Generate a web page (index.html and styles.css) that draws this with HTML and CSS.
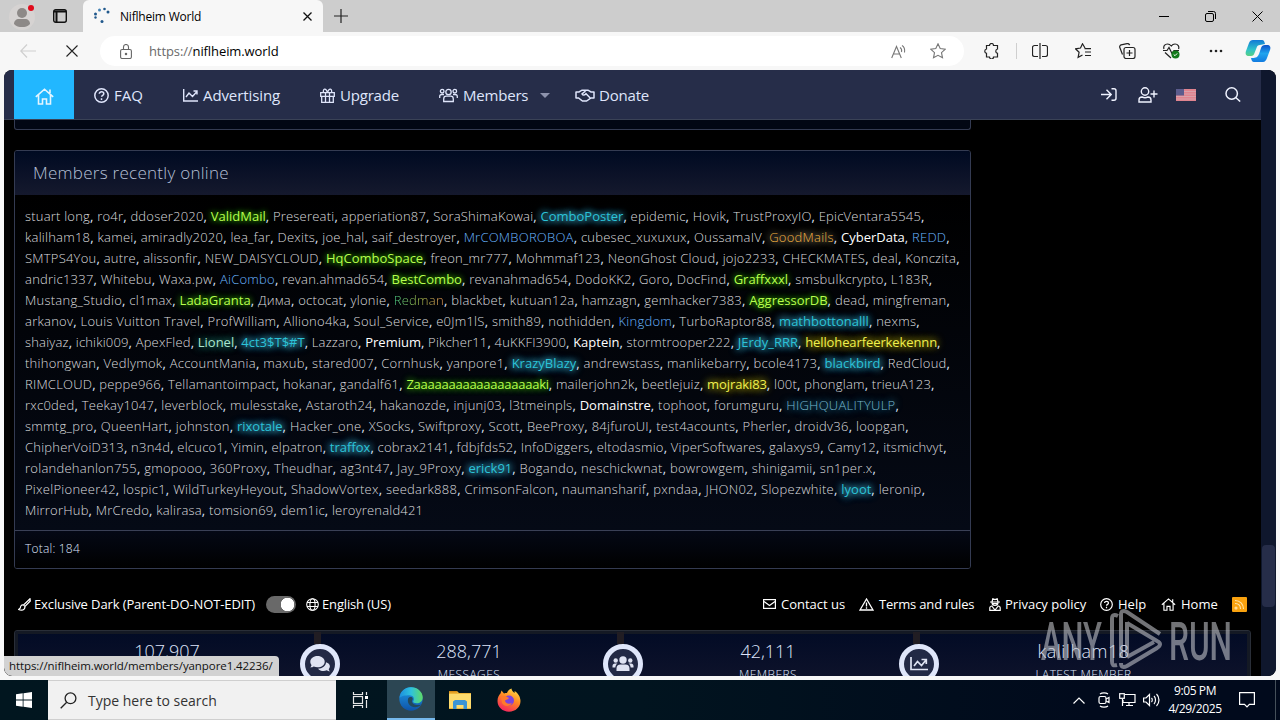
FILE: index.html
```html
<!DOCTYPE html>
<html lang="en">
<head>
  <meta charset="UTF-8">
  <meta name="viewport" content="width=device-width, initial-scale=1.0">
  <title>Niflheim World</title>
  <link rel="stylesheet" href="styles.css">
</head>
<body>
  <!-- browser tabs -->
  <div class="tabstrip">
    <div class="tab-tools">
      <div class="avatar">
        <svg width="26" height="26" viewBox="0 0 26 26"><circle cx="13" cy="13" r="13" fill="#d6d3d2"/><circle cx="13" cy="9" r="5" fill="#8d8987"/><path d="M5 20c0-3 2-5 5-5h6c3 0 5 2 5 5-2 2.500-5 3-8 3s-6-.5-8-3z" fill="#8d8987"/></svg>
        <span class="dot"></span>
      </div>
      <svg class="workspaces" width="14" height="14" viewBox="0 0 14 14" fill="none" stroke="#111" stroke-width="1.400"><rect x=".7" y=".7" width="12.600" height="12.600" rx="2"/><path d="M1 2.500h12M3.500 3v10" stroke-width="2"/></svg>
    </div>
    <div class="tab">
      <svg width="18" height="18" viewBox="0 0 18 18" fill="#20588c"><circle cx="2.500" cy="7" r="1.500"/><circle cx="6.500" cy="3" r="1.500" fill="#4583b5"/><circle cx="11.500" cy="2" r="1.300"/><circle cx="15" cy="5" r="1.500"/><circle cx="2.500" cy="10.500" r="1.200"/><circle cx="9" cy="14.500" r="1.500"/></svg>
      <span class="tab-title">Niflheim World</span>
      <svg width="9" height="9" viewBox="0 0 9 9" stroke="#111" stroke-width="1.300"><path d="M.5.5l8 8M8.500.5l-8 8"/></svg>
    </div>
    <svg class="new-tab" width="14" height="14" viewBox="0 0 14 14" stroke="#222" stroke-width="1.200"><path d="M7 0v14M0 7h14"/></svg>
    <div class="win-buttons">
      <svg width="10" height="10" viewBox="0 0 10 10" stroke="#000"><path d="M0 5.500h10"/></svg>
      <svg width="11" height="11" viewBox="0 0 11 11" fill="none" stroke="#000"><rect x=".5" y="2.500" width="8" height="8" rx="1.500"/><path d="M3 .5h5.500a2 2 0 0 1 2 2V8"/></svg>
      <svg width="11" height="11" viewBox="0 0 11 11" stroke="#000"><path d="M.5.5l10 10M10.500.5l-10 10"/></svg>
    </div>
  </div>

  <!-- address bar -->
  <div class="toolbar">
    <svg class="back" width="16" height="14" viewBox="0 0 16 14" fill="none" stroke="#cfcfcf" stroke-width="1.200"><path d="M7 .5L.8 7 7 13.500M1 7h15"/></svg>
    <svg class="stop" width="12" height="12" viewBox="0 0 12 12" stroke="#222" stroke-width="1.100"><path d="M.5.5l11 11M11.500.5l-11 11"/></svg>
    <div class="address">
      <svg width="12" height="15" viewBox="0 0 12 15" fill="none" stroke="#666" stroke-width="1.100"><rect x=".6" y="5.500" width="10.800" height="9" rx="1.500"/><path d="M3.500 5.500V3a2.500 2.500 0 0 1 5 0v2.500"/><circle cx="6" cy="10" r=".7" fill="#666"/></svg>
      <span class="url"><span class="grey">https://</span>niflheim.world</span>
      <svg class="read" width="16" height="15" viewBox="0 0 16 15" fill="none" stroke="#777" stroke-width="1.100"><path d="M.7 14L5.500 2.500 10.300 14M2.300 10h6.400M9 3.500c1.500 1 2 2.500 1.500 4.500M11 1.500c2.500 1.500 3 4 2.500 7"/></svg>
      <svg width="16" height="16" viewBox="0 0 16 16" fill="none" stroke="#777" stroke-width="1.100"><path d="M8 .8l2.200 4.700 5.100.6-3.800 3.500 1 5.200L8 12.300l-4.500 2.500 1-5.200L.7 6.100l5.100-.6z"/></svg>
    </div>
    <div class="tools">
      <svg width="15" height="16" viewBox="0 0 15 16" fill="none" stroke="#222" stroke-width="1.200"><path d="M2.500 2.500h3a2 2 0 0 1 4 0h4V6a2.200 2.200 0 0 0 0 4.300v3.700H9.500a2 2 0 0 1-4 0h-3v-3.700a2.200 2.200 0 0 1 0-4.300z"/></svg>
      <i class="sep"></i>
      <svg width="16" height="16" viewBox="0 0 16 16" fill="none" stroke="#222" stroke-width="1.200"><path d="M8 0v16M6 2.500H2.500a2 2 0 0 0-2 2v7a2 2 0 0 0 2 2H6M10 2.500h3.500a2 2 0 0 1 2 2v7a2 2 0 0 1-2 2H10"/></svg>
      <svg width="17" height="16" viewBox="0 0 17 16" fill="none" stroke="#222" stroke-width="1.200"><path d="M10 5L7.500.8 5.500 5l-5 .8 3.600 3.500-1 5 4.400-2.300M9.500 5.600h6.500M10 9h6M10 12.500h6"/></svg>
      <svg width="17" height="16" viewBox="0 0 17 16" fill="none" stroke="#222" stroke-width="1.200"><rect x="5" y="4.500" width="11" height="11" rx="2"/><path d="M10.500 7v6M7.500 10h6M3.500 11.500L.8 4.500a2 2 0 0 1 1.300-2.600L8 .7a2 2 0 0 1 2.600 1.500"/></svg>
      <svg width="17" height="16" viewBox="0 0 17 16" fill="none" stroke="#222" stroke-width="1.200"><path d="M1 6C0 3 2 1 4.500 1 6.500 1 7.500 2 8.300 3 9 2 10.500 1 12 1c3 0 4.500 2.500 3.500 5M0 7.500h4L6 4.500l3 6 2-3h5M2 9.500l6 5.500"/><circle cx="12.500" cy="11.500" r="4" fill="#12791a" stroke="none"/><path d="M10.700 11.500l1.300 1.200 2.200-2.300" stroke="#fff" stroke-width="1"/></svg>
      <svg class="dots" width="14" height="4" viewBox="0 0 14 4" fill="#222"><circle cx="2" cy="2" r="1.300"/><circle cx="7" cy="2" r="1.300"/><circle cx="12" cy="2" r="1.300"/></svg>
      <svg class="copilot" width="26" height="24" viewBox="0 0 26 24">
        <defs>
          <linearGradient id="cpA" x1="0" y1="0" x2="0" y2="1"><stop offset="0" stop-color="#1179d6"/><stop offset=".6" stop-color="#2fc3c9"/><stop offset="1" stop-color="#58d083"/></linearGradient>
          <linearGradient id="cpB" x1="0" y1="0" x2="0" y2="1"><stop offset="0" stop-color="#0c51c9"/><stop offset=".5" stop-color="#20a4ee"/><stop offset="1" stop-color="#127be0"/></linearGradient>
        </defs>
        <path d="M8 1h9c2 0 2.500 2 3 4l-5 1c-2 0-3 1-3.500 3l-2 5c-.5 2-1.500 3-3.500 3H4c-3 0-4-2-3-5L4 4c.7-2 2-3 4-3z" fill="url(#cpA)"/>
        <path d="M18 23H9c-2 0-2.500-2-3-4 0 0 5 0 6-1s1.500-2 2-3l2-6c.5-2 2-3 4-3h2c3 0 4 2 3 5l-3 8c-.7 2-2 4-4 4z" fill="url(#cpB)"/>
      </svg>
    </div>
  </div>

  <!-- forum page -->
  <div class="viewport">
    <div class="page">
      <nav class="nav">
        <a class="home"><svg width="19" height="17" viewBox="0 0 19 17" fill="none" stroke="#e4f5ff" stroke-width="1.600"><path d="M.8 8.800L9.500 1.200l8.700 7.600M15 5V1.500M3.500 7v9h4v-5h4v5h4V7"/></svg></a>
        <a class="faq"><svg width="15" height="15" viewBox="0 0 15 15" fill="none" stroke="#dfe5fb" stroke-width="1.500"><circle cx="7.500" cy="7.500" r="6.700"/><path d="M5.300 5.800c0-2.700 4.500-2.600 4.500 0 0 1.600-2.200 1.500-2.200 3M7.500 10.200v1.700"/></svg><span>FAQ</span></a>
        <a class="adv"><svg width="15" height="13" viewBox="0 0 15 13" fill="none" stroke="#dfe5fb" stroke-width="1.400"><path d="M.7 0v12H15M3 8l3-4 3.500 3.500L14 2.500M10.500 2H14v3.500"/></svg><span>Advertising</span></a>
        <a class="upg"><svg width="15" height="15" viewBox="0 0 15 15" fill="none" stroke="#dfe5fb" stroke-width="1.300"><path d="M.7 4.700h13.600v3.600H.7zM1.700 8.300h11.600v6H1.700zM5.500 4.700v9.600M9.500 4.700v9.600M7.500 4.500C6-.5 2.500.5 3.500 4.500M7.500 4.500C9-.5 12.500.5 11.500 4.500"/></svg><span>Upgrade</span></a>
        <a class="mem"><svg width="19" height="15" viewBox="0 0 19 15" fill="none" stroke="#dfe5fb" stroke-width="1.300"><circle cx="9.500" cy="4" r="2.700"/><circle cx="3.200" cy="3.200" r="1.800"/><circle cx="15.800" cy="3.200" r="1.800"/><path d="M4.700 13.500v-2.500c0-2 1-2.800 2.500-2.800h4.600c1.500 0 2.500.8 2.500 2.800v2.500zM.7 10V8.500C.7 7 1.500 6.500 3 6.500h2M18.300 10V8.500c0-1.500-.8-2-2.300-2h-2"/></svg><span>Members</span><i class="caret"></i></a>
        <a class="don"><svg width="20" height="13" viewBox="0 0 20 13" fill="none" stroke="#dfe5fb" stroke-width="1.500"><path d="M1 2.500v7M19 2.500v7M1 3h3l3-1.800h6L16 3h3M1 9h2.500l4 3h4L16 9h3M10.500 2L7 5c1 1.800 3 1.200 4-.3l4 4"/></svg><span>Donate</span></a>
        <div class="nav-right">
          <svg width="16" height="13" viewBox="0 0 16 13" fill="none" stroke="#f0f3ff" stroke-width="1.400"><path d="M0 6.500h10M5.500 1.800l4.700 4.700-4.700 4.700M10.500.8H13c1.500 0 2 .7 2 2v7.400c0 1.300-.5 2-2 2h-2.500"/></svg>
          <svg width="20" height="16" viewBox="0 0 20 16" fill="none" stroke="#f0f3ff" stroke-width="1.400"><circle cx="7" cy="4.500" r="3.700"/><path d="M1 15v-2c0-2 1.200-3 3-3 2 1 4 1 6 0 1.800 0 3 1 3 3v2zM12.500 7H19.500M16 3.500v7"/></svg>
          <svg class="flag" width="20" height="12" viewBox="0 0 20 12"><rect width="20" height="12" fill="#e0848f"/><path d="M0 2.500h20M0 5h20M0 7.500h20M0 10h20" stroke="#d8a9b2" stroke-width=".8"/><rect width="8" height="6.500" fill="#5b5c8d"/></svg>
          <svg width="16" height="15" viewBox="0 0 16 15" fill="none" stroke="#f0f3ff" stroke-width="1.500"><circle cx="6.700" cy="6.500" r="5.700"/><path d="M10.700 10.500l4.500 4"/></svg>
        </div>
      </nav>

      <div class="content">
        <div class="block block-prev"></div>
        <div class="block">
          <h3 class="block-header">Members recently online</h3>
          <div class="members">
            <p class="l1"><a>stuart long</a>, <a>ro4r</a>, <a>ddoser2020</a>, <a class="lime">ValidMail</a>, <a>Presereati</a>, <a>apperiation87</a>, <a>SoraShimaKowai</a>, <a class="cyan">ComboPoster</a>, <a>epidemic</a>, <a>Hovik</a>, <a>TrustProxyIO</a>, <a>EpicVentara5545</a>,</p>
            <p class="l2"><a>kalilham18</a>, <a>kamei</a>, <a>amiradly2020</a>, <a>lea_far</a>, <a>Dexits</a>, <a>joe_hal</a>, <a>saif_destroyer</a>, <a class="blue">MrCOMBOROBOA</a>, <a>cubesec_xuxuxux</a>, <a>OussamaIV</a>, <a class="gold">GoodMails</a>, <a class="white">CyberData</a>, <a class="blue">REDD</a>,</p>
            <p class="l3"><a>SMTPS4You</a>, <a>autre</a>, <a>alissonfir</a>, <a>NEW_DAISYCLOUD</a>, <a class="lime">HqComboSpace</a>, <a>freon_mr777</a>, <a>Mohmmaf123</a>, <a>NeonGhost Cloud</a>, <a>jojo2233</a>, <a>CHECKMATES</a>, <a>deal</a>, <a>Konczita</a>,</p>
            <p class="l4"><a>andric1337</a>, <a>Whitebu</a>, <a>Waxa.pw</a>, <a class="blue">AiCombo</a>, <a>revan.ahmad654</a>, <a class="lime">BestCombo</a>, <a>revanahmad654</a>, <a>DodoKK2</a>, <a>Goro</a>, <a>DocFind</a>, <a class="lime">Graffxxxl</a>, <a>smsbulkcrypto</a>, <a>L183R</a>,</p>
            <p class="l5"><a>Mustang_Studio</a>, <a>cl1max</a>, <a class="lime">LadaGranta</a>, <a>Дима</a>, <a>octocat</a>, <a>ylonie</a>, <a class="rainbow">Redman</a>, <a>blackbet</a>, <a>kutuan12a</a>, <a>hamzagn</a>, <a>gemhacker7383</a>, <a class="lime">AggressorDB</a>, <a>dead</a>, <a>mingfreman</a>,</p>
            <p class="l6"><a>arkanov</a>, <a>Louis Vuitton Travel</a>, <a>ProfWilliam</a>, <a>Alliono4ka</a>, <a>Soul_Service</a>, <a>e0Jm1lS</a>, <a>smith89</a>, <a>nothidden</a>, <a class="blue">Kingdom</a>, <a>TurboRaptor88</a>, <a class="cyan">mathbottonalll</a>, <a>nexms</a>,</p>
            <p class="l7"><a>shaiyaz</a>, <a>ichiki009</a>, <a>ApexFled</a>, <a class="mint">Lionel</a>, <a class="cyan">4ct3$T$#T</a>, <a>Lazzaro</a>, <a class="white">Premium</a>, <a>Pikcher11</a>, <a>4uKKFI3900</a>, <a class="white">Kaptein</a>, <a>stormtrooper222</a>, <a class="cyan">JErdy_RRR</a>, <a class="yellow">hellohearfeerkekennn</a>,</p>
            <p class="l8"><a>thihongwan</a>, <a>Vedlymok</a>, <a>AccountMania</a>, <a>maxub</a>, <a>stared007</a>, <a>Cornhusk</a>, <a>yanpore1</a>, <a class="cyan">KrazyBlazy</a>, <a>andrewstass</a>, <a>manlikebarry</a>, <a>bcole4173</a>, <a class="cyan">blackbird</a>, <a>RedCloud</a>,</p>
            <p class="l9"><a>RIMCLOUD</a>, <a>peppe966</a>, <a>Tellamantoimpact</a>, <a>hokanar</a>, <a>gandalf61</a>, <a class="lime tight">Zaaaaaaaaaaaaaaaaaaki</a>, <a>mailerjohn2k</a>, <a>beetlejuiz</a>, <a class="yellow">mojraki83</a>, <a>l00t</a>, <a>phonglam</a>, <a>trieuA123</a>,</p>
            <p class="l10"><a>rxc0ded</a>, <a>Teekay1047</a>, <a>leverblock</a>, <a>mulesstake</a>, <a>Astaroth24</a>, <a>hakanozde</a>, <a>injunj03</a>, <a>l3tmeinpls</a>, <a class="white">Domainstre</a>, <a>tophoot</a>, <a>forumguru</a>, <a class="steel">HIGHQUALITYULP</a>,</p>
            <p class="l11"><a>smmtg_pro</a>, <a>QueenHart</a>, <a>johnston</a>, <a class="cyan">rixotale</a>, <a>Hacker_one</a>, <a>XSocks</a>, <a>Swiftproxy</a>, <a>Scott</a>, <a>BeeProxy</a>, <a>84jfuroUI</a>, <a>test4acounts</a>, <a>Pherler</a>, <a>droidv36</a>, <a>loopgan</a>,</p>
            <p class="l12"><a>ChipherVoiD313</a>, <a>n3n4d</a>, <a>elcuco1</a>, <a>Yimin</a>, <a>elpatron</a>, <a class="cyan">traffox</a>, <a>cobrax2141</a>, <a>fdbjfds52</a>, <a>InfoDiggers</a>, <a>eltodasmio</a>, <a>ViperSoftwares</a>, <a>galaxys9</a>, <a>Camy12</a>, <a>itsmichvyt</a>,</p>
            <p class="l13"><a>rolandehanlon755</a>, <a>gmopooo</a>, <a>360Proxy</a>, <a>Theudhar</a>, <a>ag3nt47</a>, <a>Jay_9Proxy</a>, <a class="cyan">erick91</a>, <a>Bogando</a>, <a>neschickwnat</a>, <a>bowrowgem</a>, <a>shinigamii</a>, <a>sn1per.x</a>,</p>
            <p class="l14"><a>PixelPioneer42</a>, <a>lospic1</a>, <a>WildTurkeyHeyout</a>, <a>ShadowVortex</a>, <a>seedark888</a>, <a>CrimsonFalcon</a>, <a>naumansharif</a>, <a>pxndaa</a>, <a>JHON02</a>, <a>Slopezwhite</a>, <a class="cyan">lyoot</a>, <a>leronip</a>,</p>
            <p class="l15"><a>MirrorHub</a>, <a>MrCredo</a>, <a>kalirasa</a>, <a>tomsion69</a>, <a>dem1ic</a>, <a>leroyrenald421</a></p>
          </div>
          <div class="block-footer">Total: 184</div>
        </div>
      </div>

      <div class="footer">
        <a class="f-style"><svg width="13" height="13" viewBox="0 0 13 13" fill="none" stroke="#fff" stroke-width="1.200"><path d="M12 .8L5.500 7l1.500 1.500L12.300 3zM5.500 7C3 6.500 2.500 8.500 2.300 10L.6 11.500C3 12.800 7 12.500 7 8.500"/></svg><span>Exclusive Dark (Parent-DO-NOT-EDIT)</span></a>
        <span class="toggle"></span>
        <a class="f-lang"><svg width="13" height="13" viewBox="0 0 13 13" fill="none" stroke="#fff" stroke-width="1.100"><circle cx="6.500" cy="6.500" r="5.800"/><ellipse cx="6.500" cy="6.500" rx="2.600" ry="5.800"/><path d="M1 4.500h11M1 8.500h11"/></svg><span>English (US)</span></a>
        <a class="f-contact"><svg width="13" height="10" viewBox="0 0 13 10" fill="none" stroke="#fff" stroke-width="1.200"><rect x=".6" y=".6" width="11.800" height="8.800"/><path d="M1 2.500l5.500 4 5.500-4"/></svg><span>Contact us</span></a>
        <a class="f-terms"><svg width="15" height="13" viewBox="0 0 15 13" fill="none" stroke="#fff" stroke-width="1.300"><path d="M7.500 1L1 12h13zM7.500 4.500v4M7.500 9.300v1.400"/></svg><span>Terms and rules</span></a>
        <a class="f-privacy"><svg width="12" height="13" viewBox="0 0 12 13" fill="none" stroke="#fff" stroke-width="1.200"><path d="M1 4h10M3 4l.8-3.200L6 1.500 8.200.8 9 4M3 4.500C3 8.500 9 8.500 9 4.500M3 5.700h6M.8 12.400V10c0-1 1-2 2-2L6 12l3.200-4c1 0 2 1 2 2v2.400z"/></svg><span>Privacy policy</span></a>
        <a class="f-help"><svg width="13" height="13" viewBox="0 0 15 15" fill="none" stroke="#fff" stroke-width="1.400"><circle cx="7.500" cy="7.500" r="6.700"/><path d="M5.300 5.800c0-2.700 4.500-2.600 4.500 0 0 1.600-2.200 1.500-2.200 3M7.500 10.200v1.700"/></svg><span>Help</span></a>
        <a class="f-home"><svg width="15" height="13" viewBox="0 0 19 17" fill="none" stroke="#fff" stroke-width="1.500"><path d="M.8 8.800L9.500 1.200l8.700 7.600M15 5V1.500M3.500 7v9h4v-5h4v5h4V7"/></svg><span>Home</span></a>
        <svg class="rss" width="15" height="15" viewBox="0 0 15 15" fill="none" stroke="#ffe4ac" stroke-width="1.100"><rect width="15" height="15" rx="1" fill="#f9a20f" stroke="none"/><path d="M3 3.500c5 0 8.500 3.500 8.500 8.500M3 6.500c3.300 0 5.500 2.200 5.500 5.500"/><circle cx="4" cy="11" r="1"/></svg>
      </div>

      <div class="stats">
        <div class="stat s1"><b>107,907</b></div>
        <div class="stat s2"><b>288,771</b><span>MESSAGES</span></div>
        <div class="stat s3"><b>42,111</b><span>MEMBERS</span></div>
        <div class="stat s4"><b>kalilham18</b><span>LATEST MEMBER</span></div>
        <div class="badge b1"><svg width="20" height="17" viewBox="0 0 20 17" fill="#dfe3f2"><path d="M7.500 0C3.400 0 .3 2.500.3 5.700c0 1.300.5 2.400 1.300 3.400L.4 11.500c1.500 0 2.600-.4 3.400-.9 1.200.5 2.400.7 3.700.7 4.100 0 7.200-2.500 7.200-5.600S11.600 0 7.500 0z"/><path d="M16 6.200c0 3.500-3.600 6.300-8 6.500 1.300 1.500 3.300 2.300 5.500 2.300 1.200 0 2.300-.2 3.200-.7.9.6 2 1.100 3 1.100l-1-2.200c.8-.9 1.200-1.900 1.200-3 0-1.800-1.600-3.300-3.900-4z"/></svg></div>
        <div class="badge b2"><svg width="22" height="16" viewBox="0 0 22 16" fill="#dfe3f2"><circle cx="11" cy="4" r="3.700"/><circle cx="3.700" cy="4.500" r="2.200"/><circle cx="18.300" cy="4.500" r="2.200"/><path d="M4.500 15v-2.500c0-2.500 1.500-4 4-4h5c2.500 0 4 1.500 4 4V15zM.5 11.500V10c0-1.500 1-2.500 2.500-2.500h2.500C4 8.500 3.500 10 3.300 11.500zM21.500 11.500V10c0-1.500-1-2.500-2.500-2.500h-2.500c1.500 1 2 2.500 2.200 4z"/></svg></div>
        <div class="badge b3"><svg width="18" height="14" viewBox="0 0 18 14" fill="none" stroke="#dfe3f2" stroke-width="1.700"><path d="M1 0v12.500h17M4 9l3.500-4.500 4 4L16 3M11.500 2.500h4.800V7"/></svg></div>
      </div>
    </div>
    <div class="scrollbar"><i></i></div>
    <div class="status-url">https://niflheim.world/members/yanpore1.42236/</div>
  </div>

  <!-- windows taskbar -->
  <div class="taskbar">
    <div class="start"><svg width="16" height="16" viewBox="0 0 16 16" fill="#fff"><path d="M0 2.300L6.700 1.300v6.200H0zM7.500 1.200L16 0v7.500H7.500zM0 8.400h6.700v6.300L0 13.700zM7.500 8.400H16V16l-8.500-1.200z"/></svg></div>
    <div class="search"><svg width="17" height="17" viewBox="0 0 17 17" fill="none" stroke="#222" stroke-width="1.300"><circle cx="10.500" cy="6.300" r="5.400"/><path d="M6.700 10.300L.7 16.300"/></svg><span>Type here to search</span></div>
    <div class="task"><svg width="17" height="16" viewBox="0 0 17 16" fill="none" stroke="#e6e6e6" stroke-width="1.200"><rect x="1.500" y="4.500" width="9" height="7"/><path d="M1.500 0v2.500h9V0M1.500 16v-2.500h9V16M14.500 0v3M14.500 8v8"/><path d="M13 4h3v3h-3z" fill="#fff" stroke="none"/></svg></div>
    <div class="task active">
      <svg width="24" height="24" viewBox="0 0 24 24">
        <defs>
          <linearGradient id="edA" x1="0" y1="0" x2="1" y2="0"><stop offset="0" stop-color="#1c8fe0"/><stop offset=".5" stop-color="#2fc2dd"/><stop offset="1" stop-color="#5fdb66"/></linearGradient>
          <linearGradient id="edB" x1="0" y1="0" x2="0" y2="1"><stop offset="0" stop-color="#1f9be6"/><stop offset="1" stop-color="#0f53a8"/></linearGradient>
        </defs>
        <circle cx="12" cy="12" r="11.700" fill="url(#edB)"/>
        <path d="M.5 11C1 4.500 6 .3 12 .3c7 0 11.700 5 11.700 10 0 4-3 6-6 6-2.500 0-4-1-3.500-2 1.500-2 .8-6-3.700-6C6 8.300 2 9 .5 11z" fill="url(#edA)"/>
        <path d="M9 12c-1 5 3 9 9 8 2-.3 3.500-1.500 4.300-2.500-1.800 1-8 1-9.300-2.500-.5-1.500 1-2 .7-3.500-.5-2-4-2-4.700.5z" fill="#23495c"/>
      </svg>
    </div>
    <div class="task"><svg width="22" height="20" viewBox="0 0 22 20"><path d="M0 1h8l2 2h12v16H0z" fill="#eeb63a"/><path d="M0 4h22v14H0z" fill="#fddb6d"/><path d="M0 1h8v1.500H0z" fill="#d98e15"/><path d="M4 19v-7.500L6 10h10l2 1.500V19h-3.500v-4h-7v4z" fill="#3b94d4"/></svg></div>
    <div class="task"><svg width="24" height="24" viewBox="0 0 24 24">
      <defs><linearGradient id="fx" x1=".8" y1="0" x2=".3" y2="1"><stop offset="0" stop-color="#ffe14a"/><stop offset=".45" stop-color="#ff8a22"/><stop offset="1" stop-color="#f5225f"/></linearGradient></defs>
      <path d="M4.500 2.500L7 5.500c1-.5 2-.5 3-.5C10.500 3 12 1.500 14.500.5c0 2 1.500 3 3 4.500.2-.7.200-1.300 0-2C21 5 23.500 9 23.500 13c0 6-5 10.700-11.500 10.700S.5 19 .5 13c0-3.500 1.500-6 3-7.500z" fill="url(#fx)"/><circle cx="12" cy="12.500" r="5" fill="#7b43dd"/><path d="M4 9c2-2 5-1 8 1-1 1.800-3 1.500-4 2.500 0 3 4 4 7 2.500-2 4-8 4-10 0z" fill="#ff7a2b"/></svg></div>
    <div class="tray">
      <svg class="up" width="12" height="7" viewBox="0 0 12 7" fill="none" stroke="#fff" stroke-width="1.200"><path d="M.5 6.500L6 1l5.500 5.500"/></svg>
      <svg class="cam" width="12" height="16" viewBox="0 0 12 16" fill="none" stroke="#fff" stroke-width="1.200"><rect x="1" y="4.500" width="7" height="7" rx="1.500"/><path d="M8 7l3-1.500v5L8 9M2 2c2-1.500 6-1.500 8 0M2 14c2 1.500 6 1.500 8 0"/></svg>
      <svg class="net" width="17" height="14" viewBox="0 0 17 14" fill="none" stroke="#fff" stroke-width="1.200"><path d="M6 1.500h10v8H4V7M3.500 6v7M7 12.500h7M10 9.500v3"/><rect x=".7" y=".7" width="4.600" height="4.600"/></svg>
      <svg class="vol" width="17" height="14" viewBox="0 0 17 14" fill="none" stroke="#fff" stroke-width="1.200"><path d="M.6 5v4H3l3.500 3.500v-11L3 5zM8.500 5c1 1 1 3 0 4M11 3c2 2 2 6 0 8M13.500 1c3.300 3.300 3.300 8.700 0 12"/></svg>
      <div class="clock"><span>9:05 PM</span><span>4/29/2025</span></div>
      <svg class="note" width="16" height="16" viewBox="0 0 16 16" fill="none" stroke="#fff" stroke-width="1.200"><path d="M.6.6h14.800v11.800h-5L8 15l-2.500-2.600H.6z"/></svg>
    </div>
    <i class="show-desktop"></i>
  </div>

  <svg class="watermark" width="194" height="66" viewBox="0 0 194 66">
    <text x="2" y="52" textLength="61" lengthAdjust="spacingAndGlyphs">ANY</text>
    <text x="130" y="52" textLength="63" lengthAdjust="spacingAndGlyphs">RUN</text>
    <path d="M79 8c-4-2-6-1-6 3v42c0 4 1 5 5 4M82 50V7c0-4 2-5 6-3l33 22M88 14v34M88 15l30 18c4 2 4 4 0 7L88 58c-4 2-6 1-6-3M88 49l27-15" fill="none" stroke="#c4c6cc" stroke-width="4"/>
  </svg>
</body>
</html>
```

FILE: styles.css
```css
* {
  box-sizing: border-box;
  margin: 0;
  padding: 0;
}

body {
  width: 1280px;
  height: 720px;
  overflow: hidden;
  display: flex;
  flex-direction: column;
  position: relative;
  background: #f7f7f7;
  font-family: 'Open Sans', 'Noto Sans', sans-serif;
  color: #dfe5fb;
}

svg {
  display: block;
  flex: none;
}

/* tabs */
.tabstrip {
  height: 32px;
  flex: none;
  display: flex;
  align-items: center;
  background: #cdcdcd;
}

.tab-tools {
  width: 83px;
  height: 32px;
  display: flex;
  align-items: center;
  padding-left: 9px;
}

.avatar {
  position: relative;
  margin-top: 1px;
}

.dot {
  position: absolute;
  top: 1px;
  left: 19px;
  width: 6px;
  height: 6px;
  border-radius: 50%;
  background: #e00b1c;
}

.workspaces {
  margin-left: 18px;
}

.tab {
  width: 240px;
  height: 32px;
  display: flex;
  align-items: center;
  padding: 0 11px 0 10px;
  background: #f7f7f7;
  border-radius: 6px 6px 0 0;
}

.tab-title {
  flex: 1;
  padding-left: 9px;
  font-size: 12px;
  letter-spacing: -0.2px;
  color: #000;
}

.new-tab {
  margin-left: 11px;
}

.win-buttons {
  margin-left: auto;
  display: flex;
  align-items: center;
  gap: 36px;
  padding-right: 17px;
}

/* toolbar */
.toolbar {
  height: 38px;
  flex: none;
  display: flex;
  align-items: center;
  padding-left: 20px;
  background: #f7f7f7;
}

.stop {
  margin: 0 28px 0 30px;
}

.address {
  width: 864px;
  height: 30px;
  margin-left: -6px;
  display: flex;
  align-items: center;
  padding: 0 18px 0 20px;
  background: #fff;
  border-radius: 15px;
}

.url {
  flex: 1;
  padding-left: 17px;
  font-size: 13px;
  letter-spacing: -0.1px;
  color: #000;
}

.grey {
  color: #6a6a6a;
}

.read {
  margin-right: 23px;
}

.tools {
  display: flex;
  align-items: center;
  gap: 27px;
  padding-left: 20px;
}

.sep {
  width: 1px;
  height: 16px;
  margin: 0 -12px 0 -10px;
  background: #cfcfcf;
}

.dots {
  margin-left: 2px;
}

.copilot {
  margin-left: -5px;
}

/* page area */
.viewport {
  position: relative;
  width: 1272px;
  height: 606px;
  margin-left: 4px;
  flex: none;
  display: flex;
  overflow: hidden;
  border-radius: 8px;
  background: #000;
}

.page {
  width: 1257px;
  display: flex;
  flex-direction: column;
}

.scrollbar {
  width: 15px;
  height: 606px;
  padding: 475px 1px 0;
  background: #0f172d;
}

.scrollbar i {
  display: block;
  height: 62px;
  background: #262d49;
  border-radius: 4px;
}

.nav {
  height: 50px;
  flex: none;
  display: flex;
  align-items: stretch;
  padding-left: 10px;
  background: #262d49;
  border-bottom: 1px solid #3a4256;
}

.nav a {
  display: flex;
  align-items: center;
  gap: 5px;
  padding: 1px 0 0 20px;
  font-size: 15px;
  letter-spacing: -0.2px;
  white-space: nowrap;
}

.nav .home {
  width: 60px;
  padding: 4px 0 0 21px;
  background: #22b7ff;
}

.nav .faq { width: 89px; letter-spacing: 0; }
.nav .adv { width: 137px; letter-spacing: -0.1px; }
.nav .upg { width: 119px; }
.nav .mem { width: 136px; }
.nav .don { width: 114px; gap: 4px; }

.caret {
  margin-left: 7px;
  border: 5px solid transparent;
  border-top-color: #8d93ad;
  border-bottom: 0;
}

.nav-right {
  margin-left: auto;
  display: flex;
  align-items: center;
  padding: 0 20px 0 0;
}

.nav-right svg + svg {
  margin-left: 21px;
}

.nav-right .flag {
  margin-left: 18px;
}

.nav-right .flag + svg {
  margin-left: 29px;
}

/* members block */
.content {
  width: 957px;
  margin-left: 10px;
}

.block {
  height: 419px;
  border: 1px solid #343b52;
  border-radius: 3px;
  overflow: hidden;
}

.block-prev {
  height: 10px;
  margin-bottom: 20px;
  border-top: 0;
  border-radius: 0 0 3px 3px;
  background: #020714;
}

.block-header {
  height: 44px;
  padding-left: 18px;
  line-height: 44px;
  font-size: 17px;
  font-weight: 300;
  letter-spacing: 0.27px;
  color: #b6c0d6;
  background: linear-gradient(#000a22, #15192d);
}

.members {
  height: 335px;
  padding: 11px 10px 0;
  font-size: 13px;
  background: linear-gradient(#000, #050a16);
}

.members p {
  height: 21px;
  line-height: 21px;
  white-space: nowrap;
}

.l1 { letter-spacing: 0.21px; }
.l2 { letter-spacing: 0.24px; }
.l3 { letter-spacing: 0.228px; }
.l4 { letter-spacing: 0.244px; }
.l5 { letter-spacing: 0.264px; }
.l6 { letter-spacing: 0.258px; }
.l7 { letter-spacing: 0.178px; }
.l8 { letter-spacing: 0.264px; }
.l9 { letter-spacing: 0.215px; }
.l10 { letter-spacing: 0.244px; }
.l11 { letter-spacing: 0.28px; }
.l12 { letter-spacing: 0.222px; }
.l13 { letter-spacing: 0.258px; }
.l14 { letter-spacing: 0.265px; }
.l15 { letter-spacing: 0.206px; }

.members a {
  font-weight: 300;
  color: #dcdcdf;
}

.members .lime,
.members .cyan,
.members .white,
.members .mint,
.members .yellow {
  font-weight: 400;
  letter-spacing: 0;
}

.members .lime {
  color: #b6ff4d;
  text-shadow: 0 0 6px #3fae00, 0 0 6px #2f8a00;
}

.members .lime.tight {
  letter-spacing: -0.25px;
}

.members .cyan {
  color: #2bc3d8;
  text-shadow: 0 0 7px #2fa9cc, 0 0 9px #4d9fb8, 0 0 10px #3c7f96;
}

.members .blue {
  color: #69b4ff;
}

.members .gold {
  color: #f0b040;
  text-shadow: 0 0 8px #c0b890, 0 0 8px #8a8468;
}

.members .white {
  color: #fff;
}

.members .mint {
  color: #a9e6cf;
  text-shadow: 0 0 8px #2fa58c, 0 0 8px #2b7064;
}

.members .yellow {
  color: #f0f04e;
  text-shadow: 0 0 8px #b5a800, 0 0 8px #b5a800;
}

.members .yellow {
  letter-spacing: -0.1px;
}

.members .steel {
  color: #74b6cc;
  text-shadow: 0 0 8px #2c90b8, 0 0 8px #2c7090;
}

.members .rainbow {
  color: transparent;
  background: linear-gradient(90deg, #4bd088, #a9c850, #ffa45c);
  -webkit-background-clip: text;
  background-clip: text;
}

.block-footer {
  height: 39px;
  padding-left: 10px;
  line-height: 36px;
  font-size: 12px;
  font-weight: 300;
  letter-spacing: 0.2px;
  border-top: 1px solid #3a4056;
  background: linear-gradient(#040815, #000);
}

/* page footer */
.footer {
  height: 61px;
  flex: none;
  display: flex;
  align-items: center;
  padding: 9px 0 0 14px;
  font-size: 13px;
  color: #fff;
}

.footer a {
  display: flex;
  align-items: center;
  gap: 3px;
  white-space: nowrap;
}

.footer .f-style { width: 248px; letter-spacing: -0.11px; }

.toggle {
  width: 30px;
  height: 17px;
  margin-right: 10px;
  border-radius: 9px;
  background: radial-gradient(circle at 21.500px 8.500px, #fff 6.500px, #696969 7px);
}

.footer .f-lang { width: 457px; letter-spacing: -0.15px; }
.footer .f-contact { width: 96px; gap: 5px; }
.footer .f-terms { width: 130px; gap: 5px; letter-spacing: -0.18px; }
.footer .f-privacy { width: 111px; gap: 4px; }
.footer .f-help { width: 61px; gap: 5px; }
.footer .f-home { width: 71px; gap: 5px; }

.stats {
  position: relative;
  width: 1237px;
  height: 80px;
  margin-left: 10px;
  flex: none;
  display: flex;
  border: 1px solid #292e38;
  border-radius: 3px;
  background: linear-gradient(#020b25, #15172e);
  box-shadow: inset 0 0 0 3px #141924;
}

.stat {
  height: 60px;
  padding-top: 8px;
  display: flex;
  flex-direction: column;
  align-items: center;
}

.stat b {
  font-size: 18px;
  font-weight: 300;
  line-height: 24px;
}

.stat span {
  margin-top: 3px;
  font-size: 12px;
  font-weight: 300;
  line-height: 18px;
  letter-spacing: 0.4px;
}

.s1 { width: 304px; }
.s2 { width: 300px; }
.s3 { width: 298px; }
.s4 { width: 333px; }

.s4 b {
  letter-spacing: 0.5px;
}

.badge {
  position: absolute;
  top: 13px;
  width: 40px;
  height: 40px;
  display: flex;
  align-items: center;
  justify-content: center;
  border: 5px solid #dfe6fa;
  border-radius: 50%;
  background: #222945;
}

/* little connector above each badge */
.badge::before {
  content: "";
  position: absolute;
  top: -17px;
  left: 9px;
  width: 7px;
  height: 12px;
  background: #211d23;
}

.b1 { left: 285px; }
.b2 { left: 588px; }
.b3 { left: 884px; }

.status-url {
  position: absolute;
  left: 0;
  bottom: 0;
  width: 275px;
  height: 20px;
  padding-left: 5px;
  line-height: 19px;
  font-size: 11.500px;
  letter-spacing: -0.08px;
  white-space: nowrap;
  color: #111;
  background: #d2d2d2;
  border-radius: 0 4px 0 8px;
}

/* taskbar */
.taskbar {
  height: 40px;
  flex: none;
  margin-top: 4px;
  display: flex;
  align-items: center;
  background: linear-gradient(90deg, #01161f, #01141f 50%, #010a1c 85%);
}

.start,
.task {
  width: 48px;
  height: 40px;
  display: flex;
  align-items: center;
  justify-content: center;
}

.task {
  width: 49px;
}

.search + .task {
  width: 51px;
  padding-right: 2px;
}

.task.active {
  width: 48px;
  background: #2c4653;
  border-bottom: 2px solid #76b9ed;
}

.search {
  width: 288px;
  height: 40px;
  display: flex;
  align-items: center;
  gap: 11px;
  padding-left: 12px;
  background: #f1f1f1;
  border: 1px solid #cfcfcf;
  border-width: 1px 0;
  font-size: 14px;
  color: #333;
}

.tray {
  margin-left: auto;
  display: flex;
  align-items: center;
}

.cam { margin-left: 13px; }
.net { margin-left: 9px; }
.vol { margin-left: 7px; }

.clock {
  width: 70px;
  margin-right: 9px;
  display: flex;
  flex-direction: column;
  align-items: center;
  font-size: 12px;
  line-height: 18px;
  letter-spacing: -0.4px;
  color: #fff;
}

.note {
  margin-right: 20px;
}

.show-desktop {
  width: 5px;
  height: 40px;
  border-left: 1px solid #45505a;
}

.watermark {
  position: absolute;
  left: 1039px;
  top: 608px;
  opacity: 0.58;
  font-family: Roboto, sans-serif;
  font-size: 53px;
  font-weight: 500;
  fill: #c4c6cc;
}
```
